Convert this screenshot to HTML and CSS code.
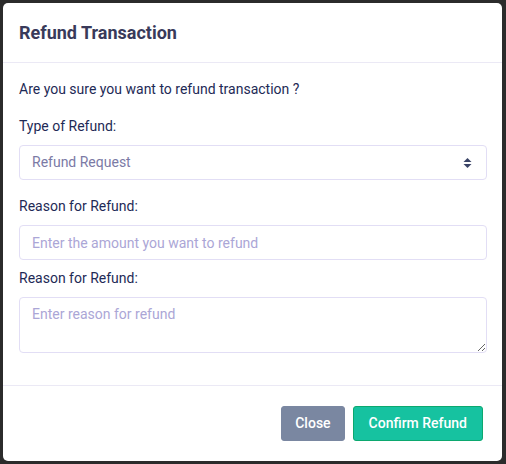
FILE: index.html
```html
<!DOCTYPE html>
<html>
<head>
<meta charset="utf-8">
<link rel="stylesheet" href="styles.css">
</head>
<body>
<div class="modal">
  <div class="modal-header">
    <h5 class="modal-title">Refund Transaction</h5>
  </div>
  <div class="modal-body">
    <p class="intro">Are you sure you want to refund transaction ?</p>
    <div class="group">
      <label class="label">Type of Refund:</label>
      <div class="select">
        <span class="select-value">Refund Request</span>
        <svg class="select-arrow" width="9" height="12" viewBox="0 0 9 12"><path d="M4.5 1 L8.5 5 H0.5 Z M4.5 11 L0.5 7 H8.5 Z" fill="#3a4466"/></svg>
      </div>
    </div>
    <div class="group">
      <label class="label">Reason for Refund:</label>
      <input class="control control-tight" type="text" placeholder="Enter the amount you want to refund">
    </div>
    <div class="group">
      <label class="label">Reason for Refund:</label>
      <textarea class="control textarea" rows="2" placeholder="Enter reason for refund"></textarea>
    </div>
  </div>
  <div class="modal-footer">
    <button class="btn btn-close">Close</button>
    <button class="btn btn-confirm">Confirm Refund</button>
  </div>
</div>
</body>
</html>
```

FILE: styles.css
```css
* { box-sizing: border-box; }
html, body { margin: 0; padding: 0; }
body {
  background: #2b2b2b;
  font-family: Roboto, "Liberation Sans", sans-serif;
  font-size: 14px;
  line-height: 21px;
  color: #1e2a56;
  padding: 3px 4px 3px 3px;
  height: 464px;
}
.modal {
  background: #fff;
  border-radius: 5px;
  width: 499px;
  height: 458px;
  display: flex;
  flex-direction: column;
}
.modal-header {
  padding: 16px 16px;
  border-bottom: 1px solid #ebe9f5;
}
.modal-title {
  margin: 0;
  font-size: 18px;
  line-height: 27px;
  font-weight: 700;
  color: #393a5a;
}
.modal-body {
  padding: 16px 15px 16px 16px;
  flex: 1;
}
.intro {
  margin: 0 0 16px 0;
}
.group {
  display: flex;
  flex-direction: column;
}
.label {
  display: block;
  margin-bottom: 8px;
}
.select {
  height: 35px;
  border: 1px solid #e2def5;
  border-radius: 4px;
  padding: 6px 12px;
  display: flex;
  align-items: center;
  justify-content: space-between;
  margin-bottom: 16px;
}
.select-value {
  color: #7b7aa5;
}
.select-arrow {
  margin-right: 2px;
}
.control {
  font-family: Roboto, "Liberation Sans", sans-serif;
  font-size: 14px;
  line-height: 21px;
  border: 1px solid #e2def5;
  border-radius: 4px;
  padding: 6px 12px;
  height: 35px;
  color: #1f2b55;
  margin: 0 0 16px 0;
  outline: none;
  width: 100%;
}
.control::placeholder {
  color: #aba6d6;
}
.control-tight {
  margin-bottom: 8px;
}
.textarea {
  height: 56px;
  resize: vertical;
  display: block;
}
.modal-footer {
  border-top: 1px solid #ebe9f5;
  padding: 20px 19px 20px 16px;
  display: flex;
  justify-content: flex-end;
  gap: 8px;
}
.btn {
  font-family: Roboto, "Liberation Sans", sans-serif;
  font-size: 14px;
  line-height: 21px;
  font-weight: 500;
  color: #fff;
  border: 1px solid transparent;
  border-radius: 3px;
  padding: 6px 13px;
  height: 35px;
}
.btn-close {
  background: #7a87a1;
  border-color: #7a87a1;
}
.btn-confirm {
  background: #16c2a0;
  border-color: #0ca86f;
  padding: 6px 15px;
}
```
